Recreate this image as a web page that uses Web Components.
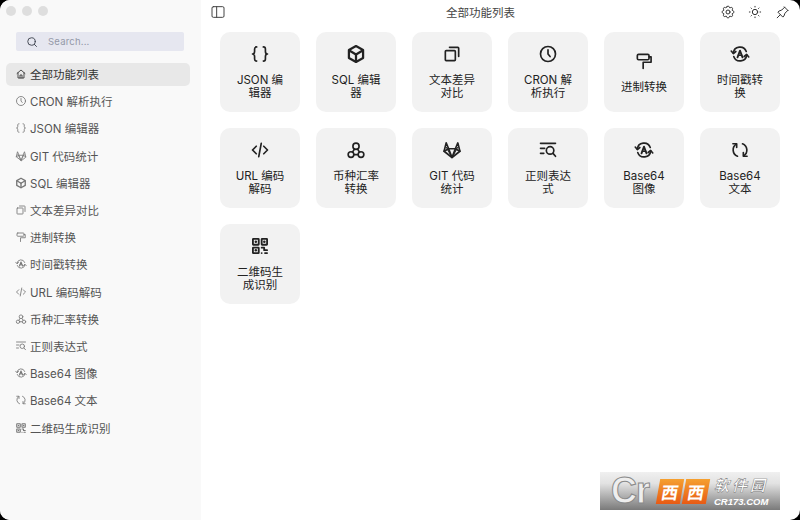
<!DOCTYPE html>
<html lang="zh-Hans">
<head>
<meta charset="utf-8">
<title>全部功能列表</title>
<style>
html, body { margin: 0; height: 100%; background: #000; overflow: hidden; }
body { font-family: Inter, "Noto Sans CJK SC", sans-serif; font-size: 11.5px; }
</style>
</head>
<body>

<app-window>
  <side-bar slot="side">
    <nav-item active icon="home">全部功能列表</nav-item>
    <nav-item icon="clock">CRON 解析执行</nav-item>
    <nav-item icon="braces">JSON 编辑器</nav-item>
    <nav-item icon="gitlab">GIT 代码统计</nav-item>
    <nav-item icon="box">SQL 编辑器</nav-item>
    <nav-item icon="copy">文本差异对比</nav-item>
    <nav-item icon="roller">进制转换</nav-item>
    <nav-item icon="letter">时间戳转换</nav-item>
    <nav-item icon="code">URL 编码解码</nav-item>
    <nav-item icon="circles">币种汇率转换</nav-item>
    <nav-item icon="regex">正则表达式</nav-item>
    <nav-item icon="letter">Base64 图像</nav-item>
    <nav-item icon="rotate">Base64 文本</nav-item>
    <nav-item icon="qr">二维码生成识别</nav-item>
  </side-bar>

  <top-bar slot="top">全部功能列表</top-bar>

  <tool-grid>
    <tool-card icon="braces">JSON 编辑器</tool-card>
    <tool-card icon="box">SQL 编辑器</tool-card>
    <tool-card icon="copy">文本差异对比</tool-card>
    <tool-card icon="clock">CRON 解析执行</tool-card>
    <tool-card icon="roller">进制转换</tool-card>
    <tool-card icon="letter">时间戳转换</tool-card>
    <tool-card icon="code">URL 编码解码</tool-card>
    <tool-card icon="circles">币种汇率转换</tool-card>
    <tool-card icon="gitlab">GIT 代码统计</tool-card>
    <tool-card icon="regex">正则表达式</tool-card>
    <tool-card icon="letter">Base64 图像</tool-card>
    <tool-card icon="rotate">Base64 文本</tool-card>
    <tool-card icon="qr">二维码生成识别</tool-card>
  </tool-grid>
</app-window>

<water-mark></water-mark>

<script>
// icon bodies, all on a 24x24 box
var ICONS = {
  home: '<path d="M4 11l8-7 8 7"/><path d="M6 9.500V20h12V9.500"/><path d="M10 20v-6h4v6"/>',
  clock: '<circle cx="12" cy="12" r="9"/><path d="M12 7v5l2.500 3"/>',
  braces: '<path d="M8 3.500c-2 0-2.500 1-2.500 2.500v3c0 1.600-.8 3-2.500 3 1.700 0 2.500 1.400 2.500 3v3c0 1.500.5 2.500 2.500 2.500"/><path d="M16 3.500c2 0 2.500 1 2.500 2.500v3c0 1.600.8 3 2.500 3-1.700 0-2.500 1.400-2.500 3v3c0 1.500-.5 2.500-2.500 2.500"/>',
  box: '<g stroke-width="2.700"><path d="M12 2.500l8.500 4.700v9.600L12 21.500l-8.500-4.700V7.200z"/><path d="M4.500 8l7.500 4.500L19.500 8"/><path d="M12 12.500V21"/></g>',
  copy: '<rect x="4" y="8" width="12" height="12" rx="1"/><path d="M9 4h10a1 1 0 0 1 1 1v10"/>',
  roller: '<rect x="4" y="4" width="14" height="6.500" rx="1.500"/><path d="M18 7h2.500v6.500H11V21"/>',
  letter: '<path d="M19.500 9A8 8 0 0 0 4 11"/><path d="M1.500 8.500L4 11.500 7 9"/><path d="M4.500 15A8 8 0 0 0 20 13"/><path d="M17 15l3-2.500 2.500 3"/><path d="M9 16l3-8 3 8" stroke-width="2.200"/><path d="M10 13.500h4" stroke-width="1.800"/>',
  code: '<path d="M7.500 7.500L3 12l4.500 4.500"/><path d="M16.500 7.500L21 12l-4.500 4.500"/><path d="M13.500 4l-3 16"/>',
  circles: '<circle cx="12" cy="7.500" r="3.700"/><circle cx="6" cy="17.500" r="3.400"/><circle cx="18" cy="17.500" r="3.400"/><path d="M10.200 10.800L7.800 14.500"/><path d="M13.800 10.800l2.400 3.700"/><path d="M9.400 17.500h5.200"/>',
  gitlab: '<path d="M12 21L2.500 13.500 5 3.500l3 7h8l3-7 2.500 10z"/><path d="M2.500 13.500L8 10.500 12 21l4-10.500 5.500 3"/><path d="M5.500 9L12 21l6.500-12" stroke-width="1.400"/>',
  regex: '<path d="M3 4h18"/><path d="M3 10h5"/><path d="M3 16h4"/><circle cx="14.500" cy="12.500" r="4.500"/><path d="M18 16l3 3.500"/>',
  rotate: '<path d="M9 19.500A8.200 8.200 0 0 1 7.500 5"/><path d="M3.500 4.500H8V9"/><path d="M15 4.500A8.200 8.200 0 0 1 16.500 19"/><path d="M20.500 19.500H16V15"/>',
  qr: '<g stroke-width="2.200"><rect x="3.500" y="3.500" width="7" height="7" rx=".5"/><rect x="14" y="3.500" width="6.500" height="7" rx=".5"/><rect x="3.500" y="14" width="7" height="6.500" rx=".5"/><path d="M14 14h3v3h3.500"/><path d="M14 20.500h.01"/><path d="M18 20.500h2.500"/></g><g stroke-width="3"><path d="M7 7h.01"/><path d="M17.200 7h.01"/><path d="M7 17.200h.01"/></g>',
  search: '<circle cx="11" cy="11" r="7.500"/><path d="M16.500 16.500L21 21"/>',
  sidebar: '<rect x="3" y="4" width="18" height="16" rx="2"/><path d="M10 4v16"/>',
  gear: '<path d="M10.325 4.317c.426-1.756 2.924-1.756 3.350 0a1.724 1.724 0 0 0 2.573 1.066c1.543-.940 3.310.826 2.370 2.370a1.724 1.724 0 0 0 1.065 2.572c1.756.426 1.756 2.924 0 3.350a1.724 1.724 0 0 0-1.066 2.573c.940 1.543-.826 3.310-2.370 2.370a1.724 1.724 0 0 0-2.572 1.065c-.426 1.756-2.924 1.756-3.350 0a1.724 1.724 0 0 0-2.573-1.066c-1.543.940-3.310-.826-2.370-2.370a1.724 1.724 0 0 0-1.065-2.572c-1.756-.426-1.756-2.924 0-3.350a1.724 1.724 0 0 0 1.066-2.573c-.940-1.543.826-3.310 2.370-2.370c1 .608 2.296.070 2.572-1.065z"/><circle cx="12" cy="12" r="3"/>',
  sun: '<circle cx="12" cy="12" r="4"/><path d="M3.500 12h1"/><path d="M12 3.500v1"/><path d="M19.500 12h1"/><path d="M12 19.500v1"/><path d="M6 6l.7.7"/><path d="M18 6l-.7.7"/><path d="M17.300 17.300l.7.7"/><path d="M6.700 17.300L6 18"/>',
  pin: '<path d="M15 4.500l-4 4-4 1.500-1.500 1.500 7 7 1.500-1.500 1.500-4 4-4"/><path d="M9 15l-4.500 4.500"/><path d="M14.500 4l5.500 5.500"/>'
}

class AppIcon extends HTMLElement {
  connectedCallback() {
    var size = this.getAttribute('size') || 20
    var sw = this.getAttribute('sw') || 2
    this.attachShadow({mode: 'open'}).innerHTML = `
      <style>
        :host { display: block; width: ${size}px; height: ${size}px; flex: none; }
        svg { display: block; width: 100%; height: 100%; fill: none; stroke: currentColor;
              stroke-width: ${sw}; stroke-linecap: round; stroke-linejoin: round; }
      </style>
      <svg viewBox="0 0 24 24">${ICONS[this.getAttribute('name')] || ''}</svg>`
  }
}
customElements.define('app-icon', AppIcon)

class AppWindow extends HTMLElement {
  constructor() {
    super()
    this.attachShadow({mode: 'open'}).innerHTML = `
      <style>
        :host { display: grid; grid-template-columns: 201px 1fr; width: 800px; height: 520px;
                background: #fff; border-radius: 10px; overflow: hidden; }
        main { display: flex; flex-direction: column; min-width: 0; }
      </style>
      <slot name="side"></slot>
      <main>
        <slot name="top"></slot>
        <slot></slot>
      </main>`
  }
}
customElements.define('app-window', AppWindow)

class SideBar extends HTMLElement {
  constructor() {
    super()
    this.attachShadow({mode: 'open'}).innerHTML = `
      <style>
        :host { display: flex; flex-direction: column; background: #f9f9f9; padding: 6px 11px 0 6px; }
        .lights { display: flex; gap: 6px; height: 10px; }
        .lights i { width: 10px; height: 10px; border-radius: 50%; background: #dedede; }
        .search { display: flex; align-items: center; gap: 10px; height: 19px; margin: 16px 6px 0 10px;
                  padding-left: 10px; background: #e6e7f0; border-radius: 2px;
                  color: #3f4450; font-size: 9.500px; }
        .search span { color: #9499a8; letter-spacing: .2px; }
        nav { display: flex; flex-direction: column; gap: 4px; margin-top: 11.500px; }
      </style>
      <div class="lights"><i></i><i></i><i></i></div>
      <div class="search"><app-icon name="search" size="12" sw="1.900"></app-icon><span>Search...</span></div>
      <nav><slot></slot></nav>`
  }
}
customElements.define('side-bar', SideBar)

class NavItem extends HTMLElement {
  constructor() {
    super()
    this.attachShadow({mode: 'open'}).innerHTML = `
      <style>
        :host { display: flex; align-items: center; gap: 3px; height: 23.200px; padding-left: 9px;
                border-radius: 5px; color: #555; font-size: 11.500px; white-space: nowrap; }
        :host([active]) { background: #e8e8e8; color: #333; }
        app-icon { color: #777; }
        :host([active]) app-icon { color: #333; }
      </style>
      <app-icon name="${this.getAttribute('icon')}" size="12" sw="1.700"></app-icon>
      <slot></slot>`
  }
}
customElements.define('nav-item', NavItem)

class TopBar extends HTMLElement {
  constructor() {
    super()
    this.attachShadow({mode: 'open'}).innerHTML = `
      <style>
        :host { display: flex; align-items: center; height: 24px; padding: 0 9px 0 9px; color: #444; font-size: 11.500px; }
        .title { flex: 1; text-align: center; padding-left: 15px; }
        .tools { display: flex; gap: 11px; color: #333; }
      </style>
      <app-icon name="sidebar" size="16" sw="1.500"></app-icon>
      <div class="title"><slot></slot></div>
      <div class="tools">
        <app-icon name="gear" size="16" sw="1.500"></app-icon>
        <app-icon name="sun" size="16" sw="1.500"></app-icon>
        <app-icon name="pin" size="17" sw="1.400"></app-icon>
      </div>`
  }
}
customElements.define('top-bar', TopBar)

class ToolGrid extends HTMLElement {
  constructor() {
    super()
    this.attachShadow({mode: 'open'}).innerHTML = `
      <style>
        :host { display: grid; grid-template-columns: repeat(6, 80px); grid-auto-rows: 80px;
                gap: 16px; padding: 8px 0 0 19px; }
      </style>
      <slot></slot>`
  }
}
customElements.define('tool-grid', ToolGrid)

class ToolCard extends HTMLElement {
  constructor() {
    super()
    this.attachShadow({mode: 'open'}).innerHTML = `
      <style>
        :host { display: flex; flex-direction: column; align-items: center; justify-content: center;
                gap: 10px; padding: 0 14px; background: #f2f2f2; border-radius: 10px;
                color: #222; font-size: 11.500px; line-height: 13px; text-align: center; }
      </style>
      <app-icon name="${this.getAttribute('icon')}" size="20" sw="2"></app-icon>
      <div><slot></slot></div>`
  }
}
customElements.define('tool-card', ToolCard)

class WaterMark extends HTMLElement {
  constructor() {
    super()
    this.attachShadow({mode: 'open'}).innerHTML = `
      <style>
        :host { position: absolute; left: 600px; top: 472px; width: 180px; height: 38px;
                display: flex; align-items: center;
                background: linear-gradient(#f0f0f0, #e2e2e2 30%, #7a7a7a); }
        .logo { width: 58px; padding-left: 11px; box-sizing: border-box; color: #eee;
                font: 700 36px/38px "Liberation Sans", sans-serif; letter-spacing: -1px;
                -webkit-text-stroke: 1px #8a8a8a; }
        .xx { display: flex; gap: 2px; }
        .xx span { width: 24px; height: 25px; color: #fff; text-align: center;
                   background: linear-gradient(#f5a030, #e85a14); transform: skewX(-10deg);
                   font: 700 17px/25px "Noto Sans CJK SC", sans-serif; }
        .right { margin-left: 6px; color: #fff; white-space: nowrap; display: flex; flex-direction: column; }
        .cn { font: italic 700 15px/22px "Noto Sans CJK SC", sans-serif; letter-spacing: 3px;
              -webkit-text-stroke: .4px #666; }
        .en { font: italic 700 9.500px/12px "Liberation Sans", sans-serif; }
      </style>
      <div class="logo">Cr</div>
      <div class="xx"><span>西</span><span>西</span></div>
      <div class="right"><div class="cn">软件园</div><div class="en">CR173.COM</div></div>`
  }
}
customElements.define('water-mark', WaterMark)
</script>
</body>
</html>
